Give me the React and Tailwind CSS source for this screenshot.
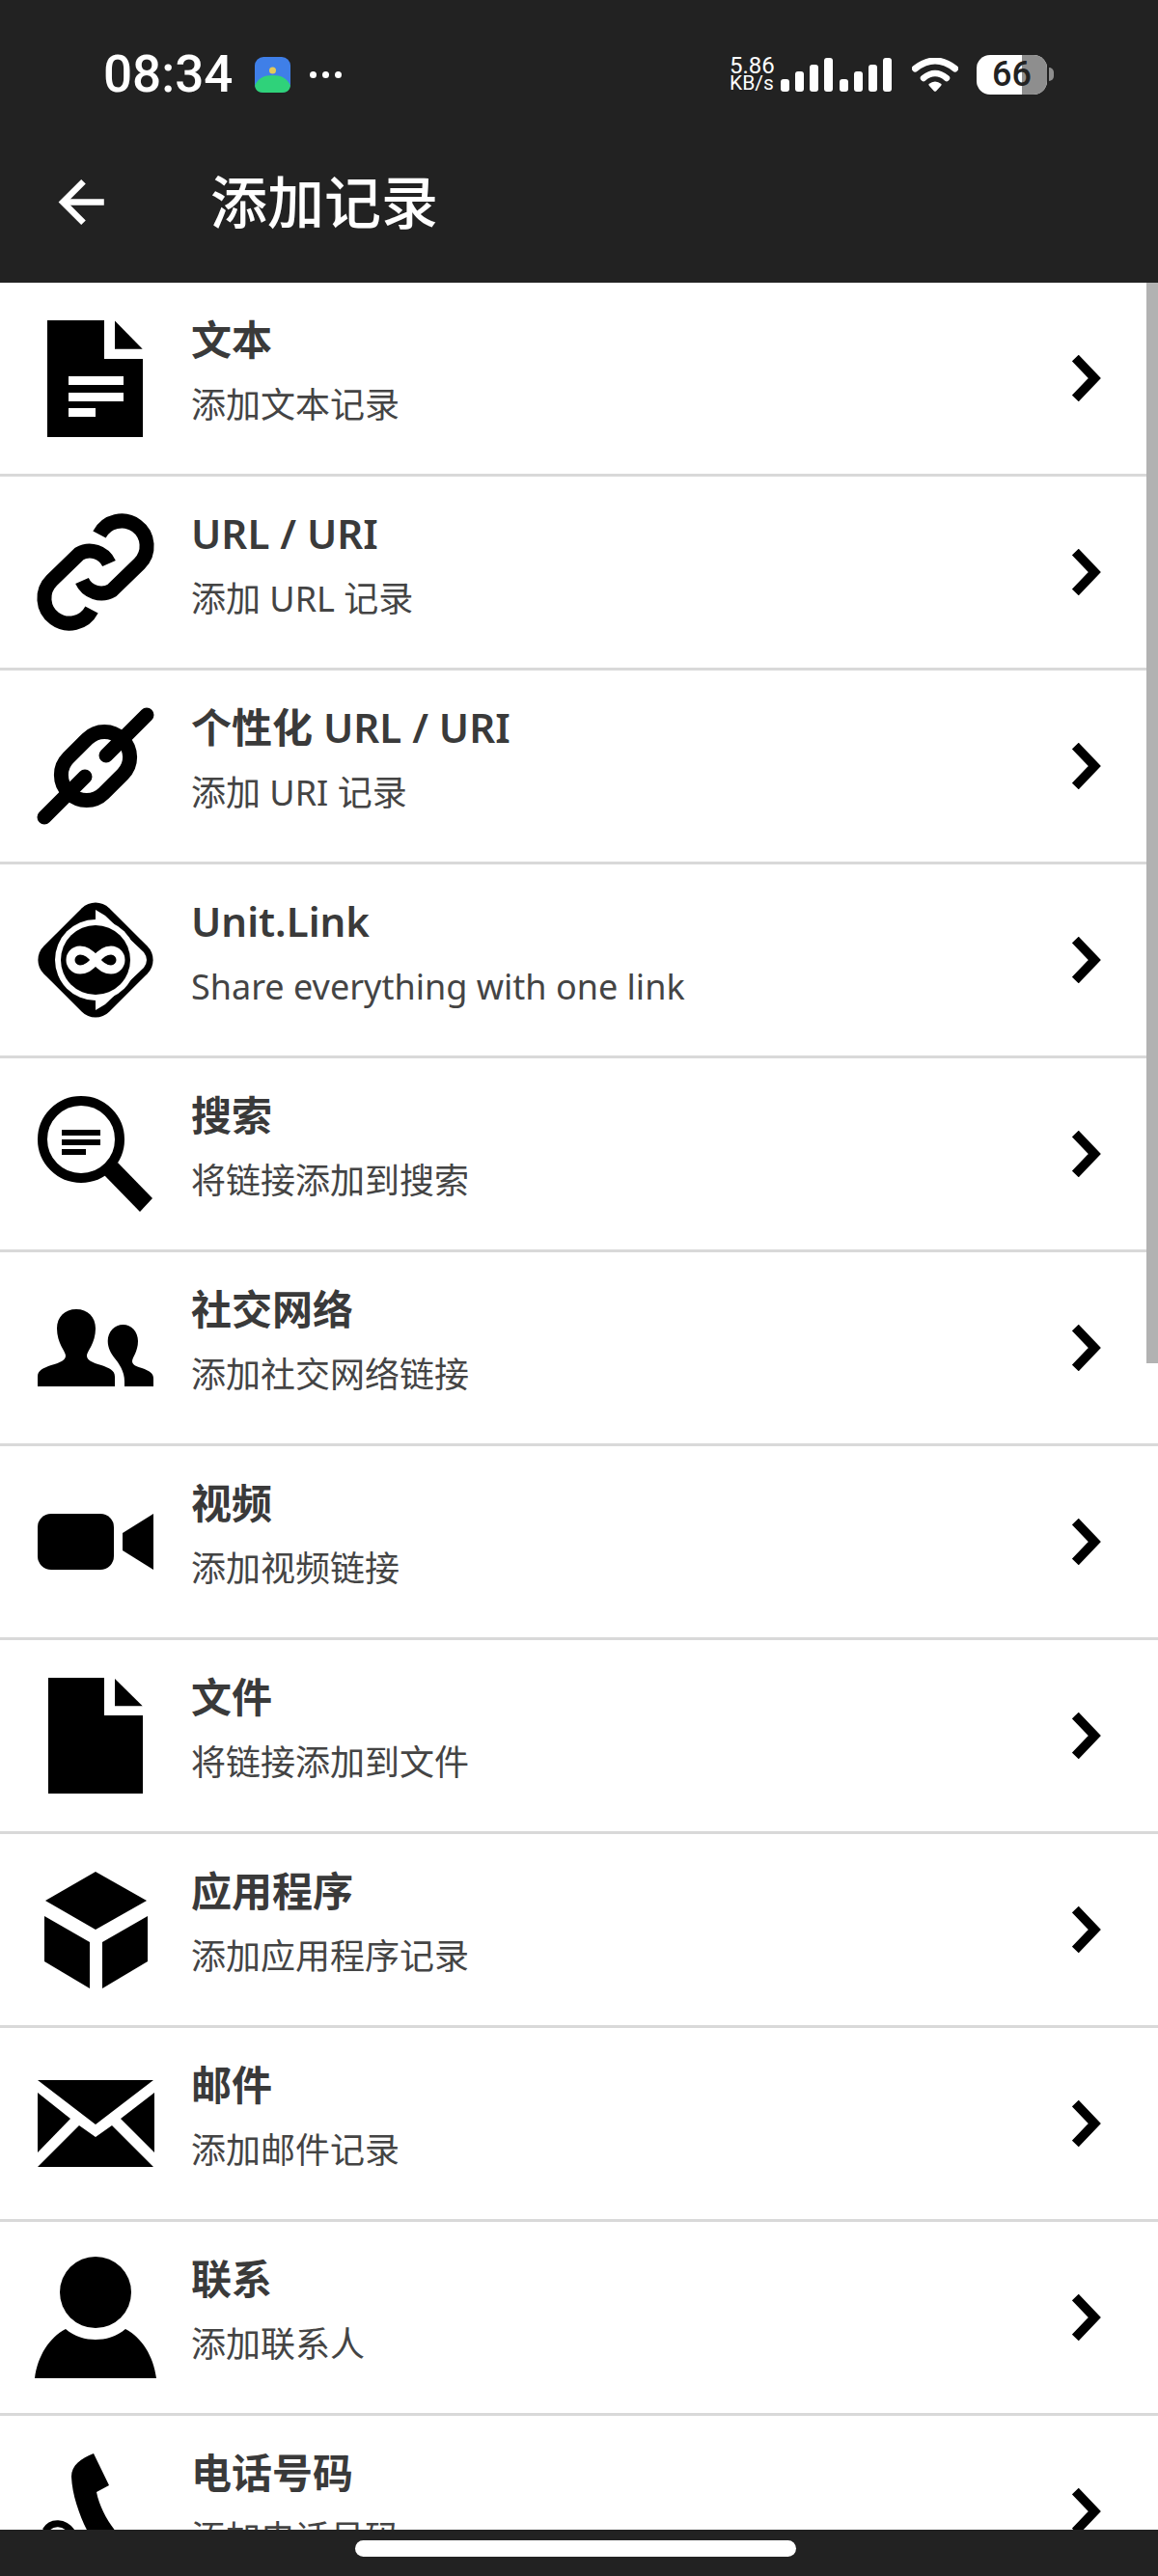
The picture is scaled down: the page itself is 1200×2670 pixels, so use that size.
import React from 'react';
import { ArrowLeft } from 'lucide-react';

const FONT = "font-['Noto_Sans','Noto_Sans_CJK_SC',sans-serif]";

const IconBox = ({ children }) => (
  <svg viewBox="0 0 120 120" className="w-[120px] h-[120px] shrink-0 overflow-visible" fill="#000">
    {children}
  </svg>
);

const DocIcon = () => (
  <IconBox>
    <path d="M10 0H69V40H109V121H10Z" />
    <path d="M80 0.5V29.7H108.7Z" />
    <path d="M32 58H89V67H32ZM32 75H89V84H32ZM32 91H60V100H32Z" fill="#fff" />
  </IconBox>
);

const LinkIcon = () => {
  const half = "M64 21A26 26 0 1 1 105.4 51.4L77 79A22 22 0 0 1 46 69";
  return (
    <IconBox>
      <path d={half} fill="none" stroke="#000" strokeWidth="15" />
      <path d={half} fill="none" stroke="#000" strokeWidth="15" transform="rotate(180 60 60)" />
    </IconBox>
  );
};

const ChainIcon = () => (
  <IconBox>
    <rect x="21" y="34" width="78" height="52" rx="25" fill="none" stroke="#000" strokeWidth="15" transform="rotate(-45 60 60)" />
    <path d="M113 7L71 49M7 113L49 71" fill="none" stroke="#000" strokeWidth="15" strokeLinecap="round" />
  </IconBox>
);

const UnitIcon = () => (
  <IconBox>
    <rect x="12" y="12" width="96" height="96" rx="20" transform="rotate(45 60 60)" />
    <path d="M60 8L70 14L110 52Q116 60 110 68L70 106L60 112Z" fill="#fff" />
    <circle cx="60" cy="60" r="42" fill="#fff" />
    <circle cx="60" cy="60" r="36" />
    <path d="M60 60C54 52 49 50 44 50C38 50 34 55 34 60C34 65 38 70 44 70C49 70 54 68 60 60C66 52 71 50 76 50C82 50 86 55 86 60C86 65 82 70 76 70C71 70 66 68 60 60Z" fill="none" stroke="#fff" strokeWidth="9" />
  </IconBox>
);

const SearchIcon = () => (
  <IconBox>
    <circle cx="45" cy="45" r="40" fill="none" stroke="#000" strokeWidth="10" />
    <path d="M69 82L83 69L119 106L106 120Z" />
    <path d="M25 35H65V41H25ZM25 45H65V51H25ZM25 55H50V61H25Z" />
  </IconBox>
);

const SocialIcon = () => (
  <IconBox>
    <path d="M0 100V90C0 83 6 81 14 78C24 75 29 73 29 68C29 64 20 55 20 40C20 28 28 20 40 20C52 20 60 28 60 40C60 55 51 64 51 68C51 73 56 75 66 78C74 81 80 83 80 90V100Z" />
    <path d="M90 100H120V92C120 86 116 84 108 81C101 79 98 77 98 74C98 70 104 64 104 53C104 43 97 36 88.5 36C80 36 72.7 43 72.7 53C72.7 60 76 66 80 71C84 76 90 84 90 95Z" />
  </IconBox>
);

const VideoIcon = () => (
  <IconBox>
    <rect x="0" y="31" width="79" height="58" rx="14" />
    <path d="M88 51L120 31V89L88 69Z" />
  </IconBox>
);

const FileIcon = () => (
  <IconBox>
    <path d="M11 0H69V39H109V120H11Z" />
    <path d="M80 1V29.3H108.7Z" />
  </IconBox>
);

const AppIcon = () => (
  <IconBox>
    <path d="M60 0L113 30L60 60L8 30Z" />
    <path d="M7 46L54 73V121L7 93Z" />
    <path d="M67 73L114 46V93L67 121Z" />
  </IconBox>
);

const MailIcon = () => (
  <IconBox>
    <path d="M0 15H120L60 61Z" />
    <path d="M0 28L34 55L0 90Z" />
    <path d="M121 28L86 55L121 90Z" />
    <path d="M0 105L43 62L60 74L77 62L120 105Z" />
  </IconBox>
);

const ContactIcon = () => (
  <IconBox>
    <circle cx="60" cy="34" r="37" />
    <path d="M-3 123C0 100 12 81 29 72C38 80 50 83 60 83C70 83 82 80 91 72C108 81 120 100 123 123Z" />
  </IconBox>
);

const PhoneIcon = () => (
  <IconBox>
    <path d="M58 0L74 33L61 40C64 55 72 70 82 82L60 95C50 80 36 50 35 24C35 12 45 5 58 0Z" />
    <path d="M8 80C14 70 28 70 36 82" fill="none" stroke="#000" strokeWidth="7" />
  </IconBox>
);

const Chevron = () => (
  <svg viewBox="0 0 30 48" className="w-[30px] h-[48px] shrink-0">
    <path d="M3.3 3L23.3 24L3.3 45" fill="none" stroke="#000" strokeWidth="9.5" />
  </svg>
);

const items = [
  { title: '文本', sub: '添加文本记录', Icon: DocIcon },
  { title: 'URL / URI', sub: '添加 URL 记录', Icon: LinkIcon },
  { title: '个性化 URL / URI', sub: '添加 URI 记录', Icon: ChainIcon },
  { title: 'Unit.Link', sub: 'Share everything with one link', Icon: UnitIcon },
  { title: '搜索', sub: '将链接添加到搜索', Icon: SearchIcon },
  { title: '社交网络', sub: '添加社交网络链接', Icon: SocialIcon },
  { title: '视频', sub: '添加视频链接', Icon: VideoIcon },
  { title: '文件', sub: '将链接添加到文件', Icon: FileIcon },
  { title: '应用程序', sub: '添加应用程序记录', Icon: AppIcon },
  { title: '邮件', sub: '添加邮件记录', Icon: MailIcon },
  { title: '联系', sub: '添加联系人', Icon: ContactIcon },
  { title: '电话号码', sub: '添加电话号码', Icon: PhoneIcon },
];

const Signal = () => (
  <svg viewBox="0 0 115 35" className="w-[115px] h-[35px]" fill="#fff">
    <rect x="0" y="22" width="9" height="13" rx="3" />
    <rect x="15" y="14" width="9" height="21" rx="3" />
    <rect x="30" y="7" width="9" height="28" rx="3" />
    <rect x="45" y="0" width="9" height="35" rx="3" />
    <rect x="61" y="22" width="9" height="13" rx="3" />
    <rect x="76" y="14" width="9" height="21" rx="3" />
    <rect x="91" y="7" width="9" height="28" rx="3" />
    <rect x="106" y="0" width="9" height="35" rx="3" />
  </svg>
);

const Wifi = () => (
  <svg viewBox="0 0 48 35" className="w-[48px] h-[35px]">
    <path d="M3.5 11Q24 -5 44.5 11" fill="none" stroke="#fff" strokeWidth="7" strokeLinecap="round" />
    <path d="M12 21Q24 11 36 21" fill="none" stroke="#fff" strokeWidth="6.5" strokeLinecap="round" />
    <path d="M17.5 27Q24 22 30.5 27Q31 28 30 29L25 34.5Q24 35 23 34.5L18 29Q17 28 17.5 27Z" fill="#fff" />
  </svg>
);

const AppBadge = () => (
  <svg viewBox="0 0 37 37" className="w-[37px] h-[37px]">
    <rect width="37" height="37" rx="9" fill="#3f7fe8" />
    <path d="M0 30C3 22 10 19 18.5 19C27 19 34 22 37 30V28C37 34 34 37 28 37H9C3 37 0 34 0 28Z" fill="#2fd27a" />
    <circle cx="18.5" cy="14" r="3.5" fill="#e4c95a" />
  </svg>
);

const App = () => {
  return (
    <div className={`${FONT} w-[1200px] h-[2670px] flex flex-col overflow-hidden bg-white`}>
      <header className="bg-[#222222] h-[293px] shrink-0 text-white">
        <div className="h-[154px] flex items-center pl-[107px]">
          <span className="font-['Roboto',sans-serif] font-medium text-[53px] leading-none w-[157px]">08:34</span>
          <AppBadge />
          <div className="flex gap-[6px] ml-[20px]">
            <span className="w-[7px] h-[7px] rounded-full bg-white" />
            <span className="w-[7px] h-[7px] rounded-full bg-white" />
            <span className="w-[7px] h-[7px] rounded-full bg-white" />
          </div>
          <div className="ml-auto flex items-center mr-[108px]">
            <div className="font-['Roboto',sans-serif] text-[24px] leading-[18px] w-[53px]">
              <div>5.86</div>
              <div className="text-[21px]">KB/s</div>
            </div>
            <Signal />
            <div className="ml-[21px]">
              <Wifi />
            </div>
            <div className="relative ml-[19px] w-[73px] h-[41px] rounded-[14px] overflow-hidden bg-white flex items-center justify-center">
              <div className="absolute right-0 top-0 bottom-0 w-[26px] bg-[#8e8e8e]" />
              <span className="relative font-['Roboto',sans-serif] font-medium text-[36px] leading-none text-[#222222]">66</span>
            </div>
            <div className="ml-[2px] w-[5px] h-[14px] rounded-r-full bg-[#8e8e8e]" />
          </div>
        </div>
        <div className="h-[110px] flex items-center pl-[50px]">
          <ArrowLeft className="w-[73px] h-[73px]" strokeWidth={2.14} strokeLinecap="butt" strokeLinejoin="miter" />
          <span className="ml-[95px] text-[59px] font-medium leading-none">添加记录</span>
        </div>
      </header>

      <main className="relative flex-1 overflow-hidden">
        {items.map(({ title, sub, Icon }) => (
          <div key={title} className="h-[201px] border-b-[3px] border-[#d9d9d9] flex items-center pl-[39px] pr-[59px]">
            <Icon />
            <div className="flex-1 self-start pt-[26px] pl-[39px]">
              <div className="text-[42px] leading-[66px] font-semibold text-[#3a3a3a]">{title}</div>
              <div className="mt-[2px] text-[36px] leading-[66px] text-[#444444]">{sub}</div>
            </div>
            <Chevron />
          </div>
        ))}
        <div className="absolute right-0 top-0 w-[12px] h-[1120px] bg-[#b2b2b2]" />
      </main>

      <footer className="h-[48px] shrink-0 bg-[#222222] flex justify-center pt-[11px] pr-[7px]">
        <div className="w-[457px] h-[17px] rounded-full bg-white" />
      </footer>
    </div>
  );
};

export default App;
